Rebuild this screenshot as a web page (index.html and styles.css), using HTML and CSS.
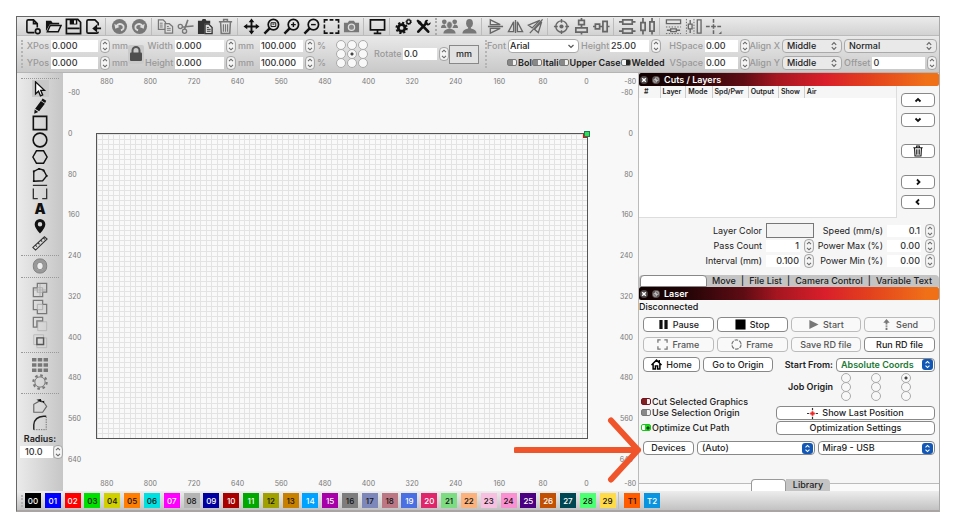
FILE: index.html
```html
<!DOCTYPE html>
<html lang="en">
<head>
<meta charset="utf-8">
<title>Laser workspace</title>
<link rel="stylesheet" href="styles.css">
</head>
<body>
<svg class="sprite" aria-hidden="true">
  <symbol id="spin" viewBox="0 0 10 14"><rect x=".6" y=".6" width="8.8" height="12.8" rx="3.4" fill="#f4f4f4" stroke="#a2a2a2"/><path d="M3 5.2 5 3.2l2 2M3 8.8l2 2 2-2" fill="none" stroke="#666" stroke-width="1.1"/></symbol>
  <symbol id="updown" viewBox="0 0 8 10"><path d="M1.8 3.8 4 1.6l2.2 2.2M1.8 6.2 4 8.4l2.2-2.2" fill="none" stroke="currentColor" stroke-width="1.2"/></symbol>
  <symbol id="close" viewBox="0 0 8 8"><circle cx="4" cy="4" r="4" fill="#4a4444"/><path d="m2.2 2.2 3.6 3.6m0-3.6L2.2 5.8" stroke="#fff" stroke-width="1.4"/></symbol>
  <symbol id="float" viewBox="0 0 8 8"><circle cx="4" cy="4" r="4" fill="#5a5050"/><path d="M3.4 1.8h2.8v2.8H3.4zM1.9 3.4h2.7v2.7H1.9z" fill="none" stroke="#ccc" stroke-width=".8"/></symbol>
  <symbol id="trash" viewBox="0 0 18 18"><path d="M2 4h14M7 4V1.500h4V4M3.800 4.500l.7 12h9l.7-12" fill="none" stroke="currentColor" stroke-width="1.600"/><path d="M6.800 6.500v8M9 6.500v8M11.200 6.500v8" stroke="currentColor" stroke-width="1.200"/></symbol>
</svg>
<main class="app">
  <nav class="toolbar icons" aria-label="Main toolbar">
    <button aria-label="New"><svg viewBox="0 0 18 18"><path d="M10 15.500H3.500Q2 15.500 2 14V3.500Q2 2 3.500 2H9l4 4v4M9 2v4h4" fill="none" stroke="currentColor" stroke-width="1.700"/><circle cx="13.500" cy="14" r="2.500" fill="none" stroke="currentColor" stroke-width="1.700"/></svg></button>
    <button aria-label="Open"><svg viewBox="0 0 18 18"><path d="M1 14V3h5.500l1.500 2h7v2H5z" fill="currentColor"/><path d="M5.500 8h11.500L14 14.500H2.500z" fill="#ddd" stroke="currentColor" stroke-width="1.600"/></svg></button>
    <button aria-label="Save"><svg viewBox="0 0 18 18"><path d="M1.500 1.500h12L16.500 4.500v12h-15z" fill="none" stroke="currentColor" stroke-width="1.800"/><path d="M5 1.500h8v5.500H5zM2.500 10h13v2h-13z" fill="currentColor"/><path d="M9.500 2.500h2v3.500h-2z" fill="#eee"/></svg></button>
    <button aria-label="Export"><svg viewBox="0 0 18 18"><path d="M14 8V5.500L10.500 2H3.500Q2 2 2 3.500v11Q2 16 3.500 16h9q1.500 0 1.500-1.500" fill="none" stroke="currentColor" stroke-width="1.700"/><path d="M17 11h-6M12 8.500 9 11l3 2.500z" fill="currentColor" stroke="currentColor" stroke-width="1.700"/></svg></button>
    <span class="sep"></span>
    <button class="dim" aria-label="Undo"><svg viewBox="0 0 18 18"><circle cx="9" cy="9" r="8" fill="currentColor"/><path d="M5 9.500Q9 4 13 8q1.500 4-2.500 5" fill="none" stroke="#ddd" stroke-width="2"/><path d="m3.500 6 1 5.500 4.500-2z" fill="#ddd"/></svg></button>
    <button class="dim" aria-label="Redo"><svg viewBox="0 0 18 18"><circle cx="9" cy="9" r="8" fill="currentColor"/><path d="M13 9.500Q9 4 5 8q-1.500 4 2.500 5" fill="none" stroke="#ddd" stroke-width="2"/><path d="m14.500 6-1 5.500-4.500-2z" fill="#ddd"/></svg></button>
    <span class="sep"></span>
    <button class="dim" aria-label="Copy"><svg viewBox="0 0 18 18"><path d="M1.500 2h5l2.500 2.500V12H1.500z" fill="none" stroke="currentColor" stroke-width="1.300"/><path d="M8.500 6H13l3.500 3v7h-8z" fill="#ddd" stroke="currentColor" stroke-width="1.300"/><path d="M3 5.500h3M3 7.500h3M3 9.500h3M10.500 9h2M10.500 11h4M10.500 13h4" stroke="currentColor"/></svg></button>
    <button class="dim" aria-label="Cut"><svg viewBox="0 0 18 18"><circle cx="3.500" cy="9" r="2.200" fill="none" stroke="currentColor" stroke-width="1.400"/><circle cx="8" cy="14" r="2.200" fill="none" stroke="currentColor" stroke-width="1.400"/><path d="m5.500 9.500 12-1M8 12l3.500-10" stroke="currentColor" stroke-width="1.700"/></svg></button>
    <button class="mid" aria-label="Paste"><svg viewBox="0 0 18 18"><path d="M1 3h4l1-2h3l1 2h4v3H8v11H1z" fill="currentColor"/><path d="M8.500 6.500h4L16 10v6.500H8.500z" fill="#ddd" stroke="currentColor" stroke-width="1.400"/><path d="M10.500 10h2M10.500 12h4M10.500 14h4" stroke="currentColor"/></svg></button>
    <button class="dim" aria-label="Delete"><svg><use href="#trash"/></svg></button>
    <span class="sep"></span>
    <button aria-label="Pan"><svg viewBox="0 0 18 18"><path d="M9 3v12M3 9h12" stroke="currentColor" stroke-width="2"/><path d="m9 .5 3 4H6zM9 17.500l3-4H6zM.500 9l4-3v6zM17.500 9l-4-3v6z" fill="currentColor"/></svg></button>
    <button aria-label="Zoom to page"><svg viewBox="0 0 18 18"><circle cx="11" cy="7" r="5.500" fill="none" stroke="currentColor" stroke-width="1.800"/><path d="m7 11-5.500 5.500" stroke="currentColor" stroke-width="2.600"/><path d="M8.500 5h5v4h-5zM10 6.500h2" fill="none" stroke="currentColor"/></svg></button>
    <button aria-label="Zoom in"><svg viewBox="0 0 18 18"><circle cx="11" cy="7" r="5.500" fill="none" stroke="currentColor" stroke-width="1.800"/><path d="m7 11-5.500 5.500" stroke="currentColor" stroke-width="2.600"/><path d="M8.500 7h5M11 4.500v5" stroke="currentColor" stroke-width="1.500"/></svg></button>
    <button aria-label="Zoom out"><svg viewBox="0 0 18 18"><circle cx="11" cy="7" r="5.500" fill="none" stroke="currentColor" stroke-width="1.800"/><path d="m7 11-5.500 5.500" stroke="currentColor" stroke-width="2.600"/><path d="M8.500 7h5" stroke="currentColor" stroke-width="1.500"/></svg></button>
    <button aria-label="Frame selection"><svg viewBox="0 0 18 18"><path d="M1.500 5V2H5M7 2h4M13 2h3.500v3M16.500 7v4M16.500 13v3H13M11 16H7M5 16H1.500v-3M1.500 11V7" fill="none" stroke="currentColor" stroke-width="1.700"/></svg></button>
    <button class="dim" aria-label="Camera"><svg viewBox="0 0 18 18"><path d="M1 5h4l1.500-2h5L13 5h4v10H1z" fill="currentColor"/><circle cx="9" cy="9.700" r="3.300" fill="#888" stroke="#ddd" stroke-width="1.300"/></svg></button>
    <span class="sep"></span>
    <button aria-label="Preview"><svg viewBox="0 0 18 18"><path d="M1.500 2h15v10.500h-15zM9 12v4M5 16.200h8" fill="none" stroke="currentColor" stroke-width="1.800"/></svg></button>
    <span class="sep"></span>
    <button aria-label="Settings"><svg viewBox="0 0 18 18"><circle cx="7" cy="10.500" r="3.500" fill="none" stroke="currentColor" stroke-width="3"/><circle cx="7" cy="10.500" r="5.500" fill="none" stroke="currentColor" stroke-width="2" stroke-dasharray="2.300 2"/><circle cx="14.500" cy="4" r="2" fill="none" stroke="currentColor" stroke-width="1.500"/><circle cx="14.500" cy="4" r="2.900" fill="none" stroke="currentColor" stroke-dasharray="1.200 1"/></svg></button>
    <button aria-label="Device settings"><svg viewBox="0 0 18 18"><path d="m3.500 14.500 8.500-9M5 5l9 9.500" stroke="currentColor" stroke-width="2.800" stroke-linecap="round"/><path d="M1.500 3 3 1.500 6.500 4 7 7 4 6.500z" fill="currentColor"/><path d="M16.500 4.500 14 6l-1.500-1.500L14 2Q10.500 1 10 5l3 3q4-.5 3.500-3.500z" fill="currentColor"/></svg></button>
    <span class="sep dotted"></span>
    <button class="dim" aria-label="Group"><svg viewBox="0 0 18 18"><circle cx="3.500" cy="4" r="2.500" fill="currentColor"/><circle cx="14.500" cy="4" r="2.500" fill="currentColor"/><path d="M0 10.500q0-3.500 4-3.500l2 3.500zM18 10.500q0-3.500-4-3.500l-2 3.500z" fill="currentColor"/><ellipse cx="9" cy="7.500" rx="3" ry="3.800" fill="currentColor" stroke="#ddd" stroke-width=".7"/><path d="M2.500 16.500q0-4.500 6.500-5.500 6.500 1 6.500 5.500z" fill="currentColor"/></svg></button>
    <button class="dim" aria-label="Ungroup"><svg viewBox="0 0 18 18"><ellipse cx="9" cy="5.500" rx="3.600" ry="4.500" fill="currentColor"/><path d="M7.500 9h3v2q6 1 6 5.500h-15q0-4.500 6-5.500z" fill="currentColor"/></svg></button>
    <span class="sep"></span>
    <button class="mid2" aria-label="Flip vertical"><svg viewBox="0 0 18 18"><path d="M3.500 7V2L14 7zM3.500 11v5L14 11zM1 9h16" fill="none" stroke="currentColor" stroke-width="1.400"/></svg></button>
    <button class="mid2" aria-label="Flip horizontal"><svg viewBox="0 0 18 18"><path d="M7 14.500H1.500L7 4zM11 14.500h5.500L11 4zM9 2v14" fill="none" stroke="currentColor" stroke-width="1.400"/></svg></button>
    <button class="mid2" aria-label="Mirror across line"><svg viewBox="0 0 18 18"><path d="m1.500 7.500 12-5-8 8zM15.500 4 12 15.500 8 12zM3 16 16.500 1.500" fill="none" stroke="currentColor" stroke-width="1.400"/></svg></button>
    <span class="sep"></span>
    <button class="mid2" aria-label="Center on page"><svg viewBox="0 0 18 18"><circle cx="9" cy="9" r="6" fill="none" stroke="currentColor" stroke-width="1.500"/><circle cx="9" cy="9" r="2.200" fill="currentColor"/><path d="M9 1v4M9 13v4M1 9h4M13 9h4" stroke="currentColor" stroke-width="1.500"/></svg></button>
    <button class="mid2" aria-label="Align vertical centers"><svg viewBox="0 0 18 18"><path d="M6 2.500h6v4.500H6zM3 10.500h12v4.500H3zM9 0v2.500M9 7v3.500M9 15v2.500" fill="none" stroke="currentColor" stroke-width="1.800"/></svg></button>
    <button class="mid2" aria-label="Align horizontal centers"><svg viewBox="0 0 18 18"><path d="M2.500 6.500H7v5H2.500zM10.500 3.500H15v11h-4.500zM0 9h2.500M7 9h3.500M15 9h2.500" fill="none" stroke="currentColor" stroke-width="1.800"/></svg></button>
    <span class="sep"></span>
    <button class="mid2" aria-label="Distribute vertically"><svg viewBox="0 0 18 18"><path d="M4 2h10v4.500H4zM4 11.500h10V16H4zM0 4.200h4M14 4.200h3.500M0 13.800h4M14 13.800h3.500" fill="none" stroke="currentColor" stroke-width="1.800"/></svg></button>
    <button class="mid2" aria-label="Distribute horizontally"><svg viewBox="0 0 18 18"><path d="M2 5h4.500v8H2zM11.500 4H16v10h-4.500zM4.200 0v5M4.200 13v4.500M13.800 0v4M13.800 14v3.500" fill="none" stroke="currentColor" stroke-width="1.800"/></svg></button>
    <span class="sep"></span>
    <button class="mid2" aria-label="Move together vertically"><svg viewBox="0 0 18 18"><path d="M1.500 2h15v4h-15z" fill="none" stroke="currentColor" stroke-width="1.400"/><path d="M1 9.500h16M1 16.500h16" stroke="currentColor" stroke-dasharray="1.500 1.500"/><path d="M6 11.500h6v3H6zM2 13h4M12 13h4" fill="none" stroke="currentColor" stroke-width="1.400"/></svg></button>
    <button class="mid2" aria-label="Move together horizontally"><svg viewBox="0 0 18 18"><path d="M13 2h4v14h-4z" fill="none" stroke="currentColor" stroke-width="1.400"/><path d="M1.500 1v16M9.500 1v16" stroke="currentColor" stroke-dasharray="1.500 1.500"/><path d="M3.500 6.500h4v5h-4zM5.500 2v4.500M5.500 11.500V16" fill="none" stroke="currentColor" stroke-width="1.400"/></svg></button>
    <button class="mid2" aria-label="Snap to position"><svg viewBox="0 0 18 18"><path d="M9 1v4M9 13v4M1 9h4M13 9h4M6.500 9h5M9 6.500v5" stroke="currentColor" stroke-width="1.600"/><path d="M17.500 14v3h-3z" fill="currentColor"/></svg></button>
  </nav>

  <section class="toolbar fields" aria-label="Shape properties">
    <span class="grip"></span>
    <div class="grid pos">
      <label for="xpos">XPos</label><input id="xpos" value="0.000"><button class="spin" aria-label="Step X"><svg><use href="#spin"/></svg></button><span>mm</span>
      <label for="ypos">YPos</label><input id="ypos" value="0.000"><button class="spin" aria-label="Step Y"><svg><use href="#spin"/></svg></button><span>mm</span>
    </div>
    <button class="lock" aria-label="Lock aspect ratio"><svg viewBox="0 0 16 18"><path d="M4.500 8V5.500a3.500 3.500 0 0 1 7 0V8" fill="none" stroke="#555" stroke-width="2"/><rect x="2" y="7.500" width="12" height="8.500" rx="1" fill="#4e4e4e"/></svg></button>
    <div class="grid size">
      <label for="w">Width</label><input id="w" value="0.000"><button class="spin" aria-label="Step width"><svg><use href="#spin"/></svg></button><span>mm</span><input aria-label="Width percent" value="100.000"><button class="spin" aria-label="Step width percent"><svg><use href="#spin"/></svg></button><span>%</span>
      <label for="h">Height</label><input id="h" value="0.000"><button class="spin" aria-label="Step height"><svg><use href="#spin"/></svg></button><span>mm</span><input aria-label="Height percent" value="100.000"><button class="spin" aria-label="Step height percent"><svg><use href="#spin"/></svg></button><span>%</span>
    </div>
    <div class="anchor">
      <input type="radio" name="a" aria-label="Top left"><input type="radio" name="a" aria-label="Top"><input type="radio" name="a" aria-label="Top right">
      <input type="radio" name="a" aria-label="Left"><input type="radio" name="a" aria-label="Center" checked><input type="radio" name="a" aria-label="Right">
      <input type="radio" name="a" aria-label="Bottom left"><input type="radio" name="a" aria-label="Bottom"><input type="radio" name="a" aria-label="Bottom right">
    </div>
    <div class="grid rotate">
      <label for="rot">Rotate</label><input id="rot" value="0.0"><button class="spin" aria-label="Step rotation"><svg><use href="#spin"/></svg></button>
    </div>
    <button class="units">mm</button>
    <span class="grip"></span>
    <div class="text">
      <div class="grid font">
        <label for="font">Font</label><span class="select combo"><select id="font"><option>Arial</option></select><svg viewBox="0 0 8 10"><path d="m1.500 4 2.500 2.500L6.500 4" fill="none" stroke="#555" stroke-width="1.200"/></svg></span>
        <label for="fh">Height</label><input id="fh" value="25.00"><button class="spin" aria-label="Step font height"><svg><use href="#spin"/></svg></button>
      </div>
      <div class="checks">
        <label><input type="checkbox">Bol</label><label><input type="checkbox">Itali</label><label><input type="checkbox">Upper Case</label><label><input type="checkbox" class="weld" checked>Welded</label>
      </div>
    </div>
    <div class="grid space">
      <label for="hs">HSpace</label><input id="hs" value="0.00"><button class="spin" aria-label="Step HSpace"><svg><use href="#spin"/></svg></button>
      <label for="ax">Align X</label><span class="select soft"><select id="ax"><option>Middle</option></select><svg><use href="#updown"/></svg></span>
      <span class="select soft"><select aria-label="Path mode"><option>Normal</option></select><svg><use href="#updown"/></svg></span>
      <label for="vs">VSpace</label><input id="vs" value="0.00"><button class="spin" aria-label="Step VSpace"><svg><use href="#spin"/></svg></button>
      <label for="ay">Align Y</label><span class="select soft"><select id="ay"><option>Middle</option></select><svg><use href="#updown"/></svg></span>
      <span class="offset"><label for="off">Offset</label><input id="off" value="0"><button class="spin" aria-label="Step offset"><svg><use href="#spin"/></svg></button></span>
    </div>
  </section>

  <div class="work">
    <aside class="tools" aria-label="Drawing tools">
      <span class="dots"></span>
      <div class="group draw">
        <button class="active" aria-label="Select"><svg viewBox="0 0 18 18"><path d="M4 1v13.500l3.300-3 2.200 5.200 2.500-1L9.800 10.500H14z" fill="#fff" stroke="currentColor" stroke-width="1.500"/></svg></button>
        <button aria-label="Draw lines"><svg viewBox="0 0 18 18"><path d="m12 .5 4 2.700-1.200 2.300L10.500 2.800zM10 3.500l4.500 3-6.500 8.500L3.500 12zM3 13l4 2.700-4.500 2z" fill="currentColor"/></svg></button>
        <button aria-label="Rectangle"><svg viewBox="0 0 18 18"><path d="M1.500 1.500h15v15h-15z" fill="none" stroke="currentColor" stroke-width="1.800"/></svg></button>
        <button aria-label="Ellipse"><svg viewBox="0 0 18 18"><circle cx="9" cy="9" r="7.700" fill="none" stroke="currentColor" stroke-width="1.800"/></svg></button>
        <button aria-label="Polygon"><svg viewBox="0 0 18 18"><path d="M1 9 5 2h8l4 7-4 7H5z" fill="none" stroke="currentColor" stroke-width="1.600"/></svg></button>
        <button aria-label="Edit nodes"><svg viewBox="0 0 18 18"><path d="M2 16V5l6-3 5 1.500L16.500 10 12 15.500z" fill="none" stroke="currentColor" stroke-width="1.500"/><path d="M7 1h2v2H7zM1 4h2v2H1zM1 15h2v2H1zM12 3h2v2h-2zM15.500 9h2v2h-2z" fill="currentColor"/></svg></button>
        <button class="mid" aria-label="Tabs"><svg viewBox="0 0 18 18"><path d="M1 1.500h16M1.500 5v11.500h5M16.500 5v11.500h-5" fill="none" stroke="currentColor" stroke-width="1.500"/></svg></button>
        <button class="glyph" aria-label="Text">A</button>
        <button aria-label="Position laser"><svg viewBox="0 0 18 18"><path fill-rule="evenodd" d="M9 17.500Q3 11 3 7a6 6 0 0 1 12 0q0 4-6 10.500zM9 9.500a2.500 2.500 0 1 0 0-5 2.500 2.500 0 0 0 0 5z" fill="currentColor"/></svg></button>
        <button class="mid" aria-label="Measure"><svg viewBox="0 0 18 18"><path d="M1 14 14 2l3 2.500L4 17zM4 11.500l1.500 1.500M7 9l1.500 1.500M10 6l1.500 1.500M13 3.500l1.500 1.500" fill="none" stroke="currentColor" stroke-width="1.200"/></svg></button>
      </div>
      <span class="dots"></span>
      <div class="group"><button class="dim" aria-label="Offset shapes"><svg viewBox="0 0 18 18"><rect x="3.500" y="3" width="11" height="12" rx="5" fill="none" stroke="#999" stroke-width="3.500"/><rect x="1.500" y="1" width="15" height="16" rx="7" fill="none" stroke="#777"/><rect x="5.500" y="5" width="7" height="8" rx="3" fill="#eee" stroke="#777"/></svg></button></div>
      <span class="dots"></span>
      <div class="group roomy">
        <button class="dim" aria-label="Weld"><svg viewBox="0 0 18 18"><path d="M6 1.500h10.500v10H12v5H1.500v-10H6z" fill="none" stroke="currentColor" stroke-width="1.400"/><path d="M6 6.500h6v5H6zM6 6.500V12M9 2v14M2 9h14" fill="none" stroke="#aaa"/></svg></button>
        <button class="dim" aria-label="Union"><svg viewBox="0 0 18 18"><path d="M1.500 1.500H12V6h4.500v10.500H6V12H1.500z" fill="none" stroke="currentColor" stroke-width="1.400"/><path d="M6 6h6v6H6z" fill="none" stroke="#aaa"/></svg></button>
        <button class="dim" aria-label="Subtract"><svg viewBox="0 0 18 18"><path d="M6.500 6.500h10v10h-10z" fill="none" stroke="#b5b5b5"/><path d="M1.500 1.500H12v4H5.500v7h-4z" fill="none" stroke="currentColor" stroke-width="1.400"/></svg></button>
        <button class="dim" aria-label="Intersect"><svg viewBox="0 0 18 18"><path d="M2 2h11v11H2zM5.500 5.500h11v11h-11z" fill="none" stroke="#b5b5b5"/><path d="M5.500 5.500h7.500v7.500H5.500z" fill="none" stroke="#555" stroke-width="1.600"/></svg></button>
      </div>
      <span class="dots"></span>
      <div class="group roomy">
        <button class="dim" aria-label="Grid array"><svg viewBox="0 0 18 18"><path d="M0 1h5v4H0zM6.500 1h5v4h-5zM13 1h5v4h-5zM0 7h5v4H0zM6.500 7h5v4h-5zM13 7h5v4h-5zM0 13h5v4H0zM6.500 13h5v4h-5zM13 13h5v4h-5z" fill="currentColor"/></svg></button>
        <button class="dim" aria-label="Circular array"><svg viewBox="0 0 18 18"><circle cx="9" cy="9" r="5.800" fill="none" stroke="currentColor" stroke-width="1.100"/><circle cx="9" cy="9" r="7.500" fill="none" stroke="currentColor" stroke-width="2.400" stroke-dasharray="2.900 2.990"/></svg></button>
      </div>
      <span class="dots"></span>
      <div class="group roomy">
        <button class="mid2" aria-label="Start point"><svg viewBox="0 0 18 18"><path d="M2 16V7l7-4 4 1.500 3.500 5-4.500 6.500z" fill="none" stroke="currentColor" stroke-width="1.300"/><path d="m5 2 5-1 1 4zM11 4l3-1-1 3z" fill="#111"/></svg></button>
        <button class="mid2" aria-label="Fillet"><svg viewBox="0 0 18 18"><path d="M2 16.500V11Q3 2 13 1.500h3" fill="none" stroke="#222" stroke-width="1.600"/><path d="M16 2v14.500H2" fill="none" stroke="currentColor" stroke-dasharray="1.500 1.200"/></svg></button>
      </div>
      <label class="radius" for="rad">Radius:</label>
      <div class="radbox"><input id="rad" value="10.0"><button class="spin" aria-label="Step radius"><svg><use href="#spin"/></svg></button></div>
    </aside>

    <section class="canvas" aria-label="Work area">
      <div class="ruler across"><span>880</span><span>800</span><span>720</span><span>640</span><span>560</span><span>480</span><span>400</span><span>320</span><span>240</span><span>160</span><span>80</span><span>0</span><span>-80</span></div>
      <div class="ruler down"><span>-80</span><span>0</span><span>80</span><span>160</span><span>240</span><span>320</span><span>400</span><span>480</span><span>560</span><span>640</span></div>
      <div class="bed"><span class="origin"></span></div>
      <div class="ruler down right"><span>-80</span><span>0</span><span>80</span><span>160</span><span>240</span><span>320</span><span>400</span><span>480</span><span>560</span><span>640</span></div>
      <div class="ruler across bottom"><span>880</span><span>800</span><span>720</span><span>640</span><span>560</span><span>480</span><span>400</span><span>320</span><span>240</span><span>160</span><span>80</span><span>0</span><span>-80</span></div>
    </section>

    <aside class="panel">
      <svg class="arrow" viewBox="0 0 130 66" aria-hidden="true"><path d="M2 33h122M97 3.500 124 33 97 62.500" fill="none" stroke="#f0542a" stroke-width="6" stroke-linecap="round" stroke-linejoin="round"/></svg>
      <h2><button aria-label="Close"><svg><use href="#close"/></svg></button><button aria-label="Float"><svg><use href="#float"/></svg></button>Cuts / Layers</h2>
      <div class="layers">
        <div class="list">
          <table><thead><tr><th class="num">#</th><th>Layer</th><th>Mode</th><th>Spd/Pwr</th><th>Output</th><th>Show</th><th>Air</th></tr></thead></table>
        </div>
        <div class="moves">
          <button aria-label="Move up"><svg viewBox="0 0 8 8"><path d="m1.500 5.500 2.500-2.500 2.500 2.500" fill="none" stroke="currentColor" stroke-width="1.800"/></svg></button>
          <button aria-label="Move down"><svg viewBox="0 0 8 8"><path d="M1.500 2.500 4 5l2.500-2.500" fill="none" stroke="currentColor" stroke-width="1.800"/></svg></button>
          <button class="del" aria-label="Delete layer"><svg class="bin"><use href="#trash"/></svg></button>
          <button aria-label="Next"><svg viewBox="0 0 8 8"><path d="M3 1.500 5.500 4 3 6.500" fill="none" stroke="currentColor" stroke-width="1.800"/></svg></button>
          <button aria-label="Previous"><svg viewBox="0 0 8 8"><path d="M5 1.500 2.500 4 5 6.500" fill="none" stroke="currentColor" stroke-width="1.800"/></svg></button>
        </div>
      </div>
      <div class="params">
        <label for="lc">Layer Color</label><button id="lc" class="swatch" aria-label="Layer Color"></button>
        <label for="sp">Speed (mm/s)</label><input id="sp" value="0.1"><button class="spin" aria-label="Step speed"><svg><use href="#spin"/></svg></button>
        <label for="pc">Pass Count</label><input id="pc" value="1"><button class="spin" aria-label="Step passes"><svg><use href="#spin"/></svg></button>
        <label for="pmx">Power Max (%)</label><input id="pmx" value="0.00"><button class="spin" aria-label="Step max power"><svg><use href="#spin"/></svg></button>
        <label for="iv">Interval (mm)</label><input id="iv" value="0.100"><button class="spin" aria-label="Step interval"><svg><use href="#spin"/></svg></button>
        <label for="pmn">Power Min (%)</label><input id="pmn" value="0.00"><button class="spin" aria-label="Step min power"><svg><use href="#spin"/></svg></button>
      </div>
      <div class="tabs"><button class="on" aria-label="Cuts / Layers"></button><button>Move</button><i>|</i><button>File List</button><i>|</i><button>Camera Control</button><i>|</i><button>Variable Text</button></div>
      <h2><button aria-label="Close"><svg><use href="#close"/></svg></button><button aria-label="Float"><svg><use href="#float"/></svg></button>Laser</h2>
      <p class="status">Disconnected</p>
      <div class="laser">
        <div class="four">
          <button class="btn"><svg viewBox="0 0 12 12"><path d="M1.500 1h3.500v10H1.500zM7 1h3.500v10H7z" fill="#111"/></svg>Pause</button>
          <button class="btn"><svg viewBox="0 0 12 12"><path d="M.5.5h11v11H.5z" fill="#000"/></svg>Stop</button>
          <button class="btn off"><svg viewBox="0 0 12 12"><path d="M1.500 1 11.500 6l-10 5z" fill="#777"/></svg>Start</button>
          <button class="btn off"><svg viewBox="0 0 12 12"><path d="m6 0 3.500 4H7v2H5V4H2.500zM5 7h2v1.500H5zM5 9.500h2V12H5z" fill="#777"/></svg>Send</button>
          <button class="btn off"><svg viewBox="0 0 12 12"><path d="M1 4V1h3M8 1h3v3M11 8v3H8M4 11H1V8" fill="none" stroke="#777" stroke-width="1.400"/></svg>Frame</button>
          <button class="btn off"><svg viewBox="0 0 12 12"><circle cx="6" cy="6" r="5" fill="none" stroke="#777" stroke-width="1.300" stroke-dasharray="4 1.200"/></svg>Frame</button>
          <button class="btn off">Save RD file</button>
          <button class="btn">Run RD file</button>
        </div>
        <div class="line">
          <button class="btn home"><svg viewBox="0 0 12 12"><path d="M.5 6.500 6 1.200l5.500 5.300M2.300 5.500v5.300h2.500V7.500h2.400v3.300h2.500V5.500M9 1v3" fill="none" stroke="#000" stroke-width="1.600"/></svg>Home</button>
          <button class="btn origin-btn">Go to Origin</button>
          <label for="sf">Start From:</label>
          <span class="select blue green"><select id="sf"><option>Absolute Coords</option></select><svg><use href="#updown"/></svg></span>
        </div>
        <div class="jobrow">
          <span class="strong">Job Origin</span>
          <div class="job">
            <input type="radio" name="j" aria-label="Top left"><input type="radio" name="j" aria-label="Top"><input type="radio" name="j" aria-label="Top right" checked>
            <input type="radio" name="j" aria-label="Left"><input type="radio" name="j" aria-label="Center"><input type="radio" name="j" aria-label="Right">
            <input type="radio" name="j" aria-label="Bottom left"><input type="radio" name="j" aria-label="Bottom"><input type="radio" name="j" aria-label="Bottom right">
          </div>
        </div>
        <div class="options">
          <div class="switches">
            <label><input type="checkbox" class="red">Cut Selected Graphics</label>
            <label><input type="checkbox">Use Selection Origin</label>
            <label class="opt"><input type="checkbox" class="go" checked>Optimize Cut Path</label>
          </div>
          <div class="wide">
            <button class="btn"><svg viewBox="0 0 12 12"><path d="M6 0v2.500M6 9.500V12M0 6h2.500M9.500 6H12" stroke="#333" stroke-width="1.300"/><path d="M6 3.500v5M3.500 6h5" stroke="#e22" stroke-width="2"/></svg>Show Last Position</button>
            <button class="btn">Optimization Settings</button>
          </div>
        </div>
        <div class="line devices">
          <button class="btn">Devices</button>
          <span class="select blue"><select aria-label="Port"><option>(Auto)</option></select><svg><use href="#updown"/></svg></span>
          <span class="select blue"><select aria-label="Device"><option>Mira9 - USB</option></select><svg><use href="#updown"/></svg></span>
        </div>
      </div>
      <div class="foot"><button class="on" aria-label="Laser"></button><button>Library</button></div>
    </aside>
  </div>

  <footer class="palette">
    <span class="grip"></span>
    <div class="swatches">
      <button class="c00 w">00</button><button class="c01 w">01</button><button class="c02 w">02</button><button class="c03">03</button><button class="c04">04</button><button class="c05">05</button><button class="c06">06</button><button class="c07 w">07</button><button class="c08">08</button><button class="c09 w">09</button><button class="c10 w">10</button><button class="c11 w">11</button><button class="c12">12</button><button class="c13">13</button><button class="c14 w">14</button><button class="c15 w">15</button><button class="c16">16</button><button class="c17">17</button><button class="c18">18</button><button class="c19 w">19</button><button class="c20 w">20</button><button class="c21">21</button><button class="c22">22</button><button class="c23">23</button><button class="c24">24</button><button class="c25 w">25</button><button class="c26 w">26</button><button class="c27 w">27</button><button class="c28">28</button><button class="c29">29</button>
    </div>
    <span class="sep"></span>
    <button class="t1">T1</button><button class="t2 w">T2</button>
  </footer>
</main>
</body>
</html>
```
FILE: styles.css
```css
* { box-sizing: border-box; }
body { margin: 0; padding: 16px 16px 15px; background: #fff; font: 500 9px/12px Inter, "Liberation Sans", sans-serif; color: #222; }
button, input, select { font: inherit; color: inherit; margin: 0; padding: 0; border: 0; background: none; border-radius: 0; min-width: 0; }
svg { display: block; flex: none; }
.sprite { position: absolute; width: 0; height: 0; }
.app { display: flex; flex-direction: column; height: calc(100vh - 31px); min-height: 490px; border: 1px solid #666; border-right-color: #aaa; border-bottom: 2px solid #aaa5a5; overflow: hidden; }

/* toolbars */
.toolbar { display: flex; flex: none; align-items: center; }
.icons { height: 19px; padding-left: 6px; background: linear-gradient(#ebebeb, #d2d2d2); border-bottom: 1px solid #bbb; }
.icons button { display: grid; place-items: center; width: 20px; height: 18px; flex: none; color: #111; }
.icons svg { width: 17px; height: 17px; }
.sep { flex: none; width: 1px; height: 17px; margin: 0 3px 0 2px; background: #bcbcbc; }
.sep.dotted { background: none; width: 2px; margin: 0 2px; border-left: 2px dotted #aaa; }
.icons .dim, .tools .dim { color: #777; }
.icons .mid, .tools .mid { color: #333; }
.icons .mid2, .tools .mid2 { color: #666; }
.fields { height: 37px; padding-left: 4px; background: linear-gradient(#e9e9e9, #c9c9c9); border-bottom: 1px solid #b5b5b5; color: #999; }
.grip { flex: none; width: 2px; height: 28px; border-left: 2px dotted #b4b4b4; }
.grid { display: grid; flex: none; grid-auto-rows: 17px; column-gap: 2px; align-items: center; }
.grid label { text-align: right; white-space: nowrap; }
.fields input:not([type]), .radbox input, .params input { width: 100%; height: 12px; background: #fff; color: #333; padding: 0 1px; }
.spin, .spin svg { display: block; width: 10px; height: 14px; }
.pos { grid-template-columns: 25px 47px 10px 15px; margin-left: 1px; }
.lock { width: 16px; height: 19px; flex: none; margin: 0 1px; background: #cacaca; border-radius: 2px; }
.lock svg { width: 16px; height: 18px; }
.size { grid-template-columns: 28px 49px 10px 20px 43px 10px 9px; }
.anchor { display: grid; flex: none; grid-template-columns: repeat(3, 11px); grid-auto-rows: 9px; margin: 0 6px 0 9px; place-items: center; }
input[type="radio"] { appearance: none; width: 10px; height: 10px; border: 1px solid #aaa; border-radius: 50%; background: #f8f8f8; }
input[type="radio"]:checked { background: radial-gradient(circle, #444 0 1px, #f8f8f8 2px); }
.rotate { grid-template-columns: 27px 34px 10px; }
.units { flex: none; width: 30px; height: 19px; margin-right: 6px; border: 1px solid #888; background: #e2e2e2; color: #222; }
.text { flex: none; width: 174px; }
.font { grid-template-columns: 19px 71px 27px 39px 10px; }
.select { display: grid; min-width: 0; align-items: center; }
.select > * { grid-area: 1 / 1; }
.select select { appearance: none; width: 100%; height: 14px; padding: 0 4px; border: 1px solid #aaa; border-radius: 4px; background: #fff; color: #222; }
.select svg { justify-self: end; width: 8px; height: 10px; margin-right: 4px; pointer-events: none; color: #666; }
.combo select { padding: 0 1px; }
.soft select { background: #e9e9e9; }
.checks { display: flex; height: 17px; align-items: center; padding-left: 20px; color: #222; white-space: nowrap; }
.checks label { display: flex; align-items: center; gap: 1px; flex: none; font-weight: 600; }
input[type="checkbox"] { appearance: none; flex: none; width: 10px; height: 7px; border: 1px solid #777; border-radius: 2px; background: linear-gradient(90deg, #888 60%, #f2f2f2 60%); }
input.weld { background: linear-gradient(90deg, #f2f2f2 50%, #222 50%); }
input.red { border-color: #712; background: linear-gradient(90deg, #812020 60%, #f2f2f2 60%); }
input.go { border-color: #1bc41b; background: radial-gradient(circle at 6px 3px, #030 0 1px, transparent 2px), linear-gradient(90deg, #fff 40%, #1de01d 40%); }
.space { grid-template-columns: 34px 33px 10px 28px 60px 93px; margin-left: 8px; }
.space label { justify-self: end; }
.offset { display: flex; align-items: center; gap: 2px; }
.offset input { flex: 1; }

/* workspace */
.work { display: flex; flex: 1; min-height: 0; }
.tools { display: flex; flex: none; flex-direction: column; width: 46px; padding-top: 4px; background: linear-gradient(90deg, #ebebeb, #c6c6c6); }
.dots { flex: none; height: 1px; margin: 1px 4px 1px; border-top: 1px dotted #999; }
.group { display: grid; flex: none; grid-auto-rows: 17px; justify-content: center; padding: 0 0 2px; }
.roomy { padding: 2px 0; }
.draw { height: 174px; grid-auto-rows: 1fr; }
.tools .group button { display: grid; place-items: center; width: 17px; color: #111; }
.tools .group .dim { color: #777; }
.tools .group .mid { color: #333; }
.tools .group .mid2 { color: #666; }
.group svg { width: 16px; height: 16px; }
.tools .group .active { background: #c8c8c8; }
.tools .group .glyph { font: 900 14px/16px Inter, sans-serif; }
.radius { text-align: center; font-weight: 600; }
.radbox { display: flex; align-items: center; padding-left: 3px; }
.radbox input { flex: 1; padding-left: 5px; }
.canvas { display: grid; flex: 1; min-width: 0; overflow: hidden; background: #f8f8f8; }
.canvas > * { grid-area: 1 / 1; }
.ruler { display: grid; font-size: 7px; line-height: 8px; font-weight: 400; color: #777; }
.across { grid-auto-flow: column; grid-auto-columns: 1fr; align-self: start; margin: 5px -14px 0 22px; text-align: center; }
.bottom { align-self: end; margin-bottom: 3px; }
.down { grid-auto-rows: 1fr; align-items: center; justify-self: start; margin: 0 0 11px 5px; }
.down.right { justify-self: end; margin-right: 5px; text-align: right; }
.bed { position: relative; margin: 60px 50px 52px 33px; border: 1px solid #555; background: repeating-linear-gradient(90deg, #e3e3e3 0 1px, transparent 1px calc(100% / 90)), repeating-linear-gradient(#e3e3e3 0 1px, transparent 1px calc(100% / 60)), #f9f9f9; }
.origin { position: absolute; top: -3px; right: -3px; width: 6px; height: 6px; background: #3d5; border: 1px solid #275; box-shadow: -2px 2px 0 -1px #d11; }

/* docked panels */
.panel { position: relative; display: flex; flex: none; flex-direction: column; width: 301px; background: #f6f6f6; border-left: 1px solid #bbb; }
.arrow { position: absolute; right: 295px; bottom: 8px; width: 130px; height: 66px; pointer-events: none; }
h2 { display: flex; flex: none; align-items: center; gap: 4px; height: 13px; margin: 0; padding-left: 1px; border-radius: 2px; font-size: 9px; font-weight: 600; color: #fff; background: linear-gradient(90deg, #100 0, #200406 15%, #5f0c14 35%, #a51620 46%, #d91f2b 62%, #e23f1e 76%, #f07018 96%); }
h2 svg { width: 8px; height: 8px; }
.layers { display: flex; height: 132px; }
.list { flex: 1; background: #fff; border: 1px solid #ddd; border-width: 0 1px 1px 0; }
table { border-collapse: collapse; width: 100%; background: #f6f6f6; }
th { height: 12px; padding: 0 4px 0 2px; font-size: 7px; line-height: 10px; font-weight: 600; text-align: left; border-left: 1px solid #ccc; }
th:last-child { width: 100%; }
th.num { min-width: 20px; border-left: 0; padding-left: 5px; padding-right: 11px; }
.moves { display: grid; width: 42px; padding: 7px 4px 0; align-content: start; gap: 6px; }
.moves button { display: grid; place-items: center; height: 14px; border: 1px solid #888; border-radius: 4px; background: #fff; color: #111; }
.moves .del { margin: 11px 0; }
.moves svg { width: 8px; height: 8px; }
.moves .bin { width: 12px; height: 12px; }
.params { display: grid; grid-template-columns: 123px 34px 10px 65px 34px 10px; column-gap: 4px; grid-auto-rows: 15px; align-items: center; padding: 5px 0 7px; }
.params label { text-align: right; white-space: nowrap; justify-self: end; font-weight: 400; }
.params input { text-align: right; background: #fff; }
.swatch { grid-column: span 2; height: 15px; border: 1px solid #777; background: #f3f3f3; }
.tabs { display: flex; height: 12px; align-items: center; justify-content: space-between; padding-right: 7px; background: #c4c4c4; border-radius: 4px 4px 0 0; white-space: nowrap; }
.tabs .on { width: 67px; height: 12px; margin-left: 1px; border: 1px solid #888; border-radius: 4px 4px 0 0; background: #fff; }
.tabs i { font-style: normal; }
.status { margin: 0; line-height: 13px; color: #111; }
.laser { display: flex; flex-direction: column; padding: 4px 4px 0 4px; }
.btn { display: flex; align-items: center; justify-content: center; gap: 4px; height: 15px; border: 1px solid #888; border-radius: 4px; background: #fff; color: #222; white-space: nowrap; }
.btn svg { width: 11px; height: 11px; }
.btn.off { border-color: #bbb; color: #555; background: #f9f9f9; }
.four { display: grid; grid-template-columns: repeat(4, 1fr); gap: 5px 3px; }
.line { display: flex; align-items: center; gap: 3px; margin-top: 5px; }
.home { width: 57px; }
.origin-btn { width: 70px; }
.line label { flex: 1; text-align: right; font-weight: 600; white-space: nowrap; }
.line > .select { width: 99px; }
.blue select { border-color: #888; }
.blue svg { width: 11px; height: 11px; margin-right: 2px; padding: 1px; border-radius: 3px; background: #1257b5; color: #fff; }
.green select { color: #1c7a34; font-weight: 600; }
.jobrow { display: flex; align-items: center; justify-content: flex-end; gap: 8px; margin-top: 1px; padding-right: 24px; }
.strong { font-weight: 600; }
.job { display: grid; grid-template-columns: repeat(3, 10px); grid-auto-rows: 9px; column-gap: 20px; }
.options { display: flex; justify-content: space-between; align-items: flex-end; margin-top: -4px; }
.switches { display: grid; grid-auto-rows: 11px; margin-left: -2px; white-space: nowrap; }
.switches label { display: flex; align-items: center; gap: 1px; }
.switches .opt { margin: 4px 0 -4px; }
.wide { display: grid; gap: 1px; width: 159px; margin-bottom: -6px; }
.wide .btn { height: 14px; }
.devices { margin: 12px 0 0; }
.devices .btn { width: 51px; height: 14px; }
.devices > .select { flex: 1; }
.foot { display: flex; justify-content: center; margin-top: auto; height: 12px; padding-left: 3px; background: linear-gradient(#f6f6f6 4px, #bbb 4px 5px, #fafafa 5px); }
.foot button { width: 44px; background: #c4c4c4; border-radius: 0 4px 0 0; }
.foot .on { width: 35px; background: #fff; border: 1px solid #999; border-bottom: 0; border-radius: 4px 4px 0 0; }

/* palette */
.palette { display: flex; flex: none; align-items: center; height: 19px; padding-left: 4px; background: linear-gradient(#ededed, #c2c2c2); }
.palette .grip { height: 12px; }
.swatches { display: flex; justify-content: space-between; width: 591px; margin-left: 2px; }
.palette button { width: 16px; height: 15px; font-size: 8px; color: #111; }
.palette .w { color: #fff; }
.palette .t1 { margin: 0 4px 0 2px; background: #ff5c00; }
.palette .t2 { background: #0a94e0; }
.c00 { background: #000; } .c01 { background: #00f; } .c02 { background: #f00; } .c03 { background: #00e000; } .c04 { background: #d0d000; }
.c05 { background: #ff7d00; } .c06 { background: #00e0e0; } .c07 { background: #f0f; } .c08 { background: #b4b4b4; } .c09 { background: #0000a0; }
.c10 { background: #a80000; } .c11 { background: #00a800; } .c12 { background: #a0a000; } .c13 { background: #c88000; } .c14 { background: #00a2ff; }
.c15 { background: #a800a8; } .c16 { background: #7d7d7d; } .c17 { background: #7d87b9; } .c18 { background: #bb7784; } .c19 { background: #4a6fe3; }
.c20 { background: #e0266a; } .c21 { background: #7ddc82; } .c22 { background: #fbb27c; } .c23 { background: #f8c0e0; } .c24 { background: #fa90d2; }
.c25 { background: #4b0082; } .c26 { background: #c25004; } .c27 { background: #004754; } .c28 { background: #4dff72; } .c29 { background: #ffdb4a; }
```
